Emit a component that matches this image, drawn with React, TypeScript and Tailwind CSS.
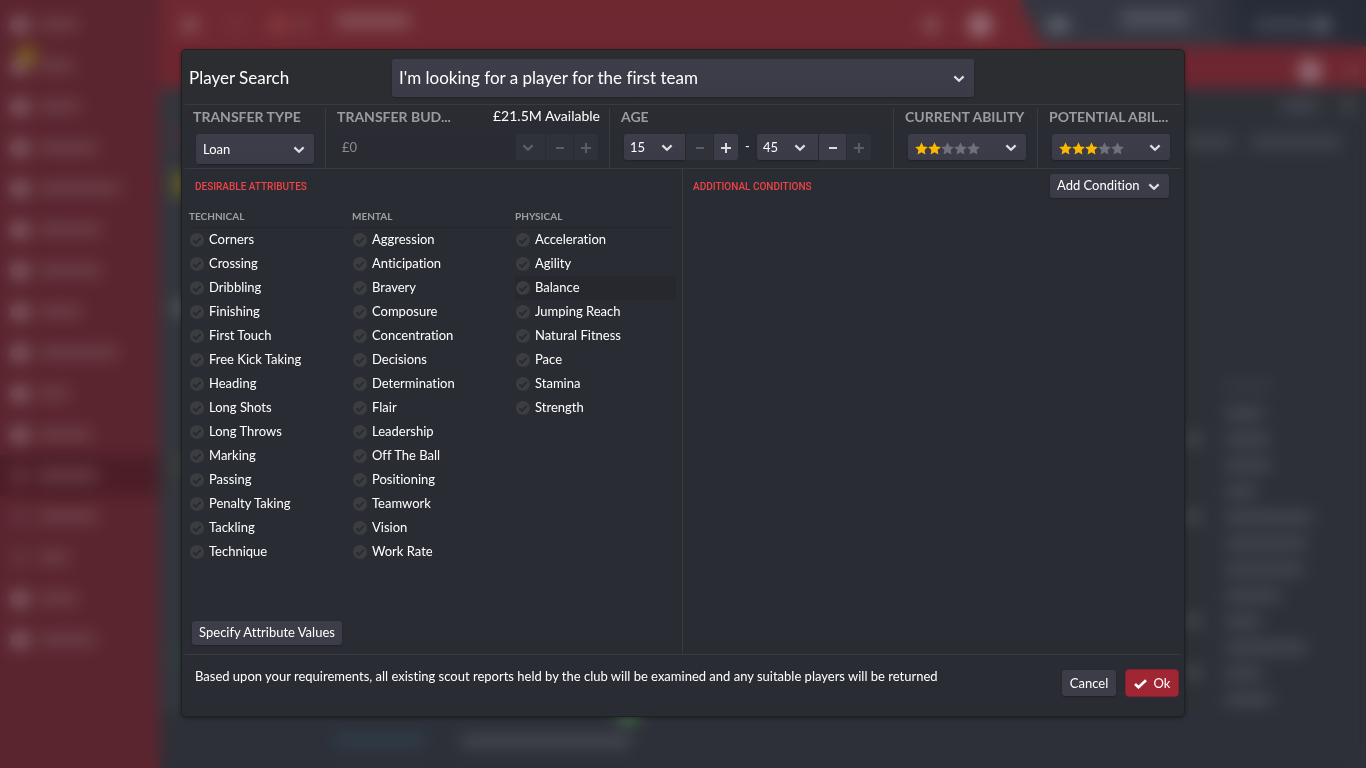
import React, { useState } from 'react';
import clsx from 'clsx';

type GroupName = 'Technical' | 'Mental' | 'Physical';

const ATTRIBUTES: Record<GroupName, string[]> = {
  Technical: ['Corners', 'Crossing', 'Dribbling', 'Finishing', 'First Touch', 'Free Kick Taking', 'Heading', 'Long Shots', 'Long Throws', 'Marking', 'Passing', 'Penalty Taking', 'Tackling', 'Technique'],
  Mental: ['Aggression', 'Anticipation', 'Bravery', 'Composure', 'Concentration', 'Decisions', 'Determination', 'Flair', 'Leadership', 'Off The Ball', 'Positioning', 'Teamwork', 'Vision', 'Work Rate'],
  Physical: ['Acceleration', 'Agility', 'Balance', 'Jumping Reach', 'Natural Fitness', 'Pace', 'Stamina', 'Strength'],
};

const HIGHLIGHTED = 'Balance';

// label widths of the shell behind the dialog
const NAV_WIDTHS = [38, 34, 40, 58, 80, 62, 62, 42, 78, 30, 52, 58, 58, 30, 38, 56];
const ROW_WIDTHS = [37, 43, 44, 30, 86, 80, 77, 54, 35, 80, 35, 45];
const ROWS_WITH_VALUE = [1, 4, 8, 10];

const Chevron: React.FC<{ className?: string }> = ({ className }) => (
  <svg viewBox="0 0 12 8" className={clsx('h-2 w-3 shrink-0', className)} fill="none" stroke="currentColor" strokeWidth="2.2" aria-hidden="true">
    <path d="M1.4 1.4 6 5.800l4.600-4.400" />
  </svg>
);

const Minus: React.FC = () => (
  <svg viewBox="0 0 10 10" className="size-[10px]" fill="none" stroke="currentColor" strokeWidth="2" aria-hidden="true">
    <path d="M1 5h8" />
  </svg>
);

const Plus: React.FC = () => (
  <svg viewBox="0 0 10 10" className="size-[10px]" fill="none" stroke="currentColor" strokeWidth="2" aria-hidden="true">
    <path d="M0 5h10M5 0v10" />
  </svg>
);

const Star: React.FC<{ filled: boolean }> = ({ filled }) => (
  <svg viewBox="0 0 24 24" className={clsx('size-[13px]', filled ? 'text-[#fbba00]' : 'text-[#6f717a]')} fill="currentColor" aria-hidden="true">
    <path d="M12 .6l3.500 7.500 8.200 1-6 5.700 1.500 8.200L12 19l-7.200 4 1.500-8.200-6-5.700 8.200-1z" />
  </svg>
);

interface DropdownProps {
  label: string;
  options: string[];
  className?: string;
  selectClassName?: string;
  chevronClassName?: string;
}

const Dropdown: React.FC<DropdownProps> = ({ label, options, className, selectClassName, chevronClassName }) => (
  <div className={clsx('relative flex bg-linear-to-b from-[#3d3e49] to-[#3a3b46] shadow-[0_1px_2px_rgba(0,0,0,0.25)]', className)}>
    <select aria-label={label} className={clsx('w-full appearance-none bg-transparent outline-none', selectClassName)}>
      {options.map((o) => (
        <option key={o}>{o}</option>
      ))}
    </select>
    <span className={clsx('pointer-events-none absolute inset-y-0 flex items-center pt-px text-[#dedee0]', chevronClassName)}>
      <Chevron />
    </span>
  </div>
);

const StarDropdown: React.FC<{ label: string; initial: number }> = ({ label, initial }) => {
  const [value, setValue] = useState(initial);
  return (
    <div className="relative mr-[11px] ml-[14px] flex h-[26px] items-center justify-between rounded-[3px] bg-linear-to-b from-[#3d3e49] to-[#3a3b46] pt-[2px] pr-[9px] pl-[7px] text-[#dedee0] shadow-[0_1px_2px_rgba(0,0,0,0.25)]">
      <span className="flex">
        {[1, 2, 3, 4, 5].map((n) => (
          <Star key={n} filled={n <= value} />
        ))}
      </span>
      <Chevron />
      <select aria-label={label} value={value} onChange={(e) => setValue(Number(e.target.value))} className="absolute inset-0 w-full opacity-0">
        {[1, 2, 3, 4, 5].map((n) => (
          <option key={n} value={n}>{n}</option>
        ))}
      </select>
    </div>
  );
};

const StepButton: React.FC<{ label: string; disabled?: boolean; className?: string; children: React.ReactNode }> = ({ label, disabled, className, children }) => (
  <button
    type="button"
    aria-label={label}
    disabled={disabled}
    className={clsx('flex h-[26px] items-center justify-center pt-px', disabled ? 'bg-[#30323a] text-[#5c5e66]' : 'bg-[#3c3d48] text-[#dedee0]', className)}
  >
    {children}
  </button>
);

const AgeStepper: React.FC<{ label: string; value: string; atMin?: boolean; atMax?: boolean }> = ({ label, value, atMin, atMax }) => (
  <div className="flex gap-px">
    <Dropdown label={label} options={[value]} className="h-[26px] w-[61px] rounded-l-[3px]" selectClassName="pt-px pl-1.5 text-[13px]" chevronClassName="right-3" />
    <StepButton label={`Decrease ${label}`} disabled={atMin} className="w-[27px]">
      <Minus />
    </StepButton>
    <StepButton label={`Increase ${label}`} disabled={atMax} className="w-6 rounded-r-[3px]">
      <Plus />
    </StepButton>
  </div>
);

const Filter: React.FC<{ title: string; note?: string; children: React.ReactNode }> = ({ title, note, children }) => (
  <div className="group/filter mt-[3px] min-w-0 border-l border-[#3a3b3e] first:border-l-0">
    <div className="flex h-[26px] items-start justify-between pr-[9px] pl-[11px] group-first/filter:pl-2">
      <h3 className="text-[14px] leading-[18px] font-bold whitespace-nowrap text-[#9b9ca0]">{title}</h3>
      {note && <span className="text-[14px] leading-4 whitespace-nowrap">{note}</span>}
    </div>
    {children}
  </div>
);

const AttributeColumn: React.FC<{ name: GroupName }> = ({ name }) => (
  <fieldset className="min-w-0">
    <legend className="h-[18px] w-full border-b border-[#25272c] text-[10px] leading-3 font-bold text-[#9fa0a3] uppercase">{name}</legend>
    {ATTRIBUTES[name].map((attr) => (
      <label key={attr} className={clsx('flex h-6 items-center gap-[5px] pl-px text-[13px]', attr === HIGHLIGHTED && 'bg-[#26282d]')}>
        <span className="relative flex size-[14px]">
          <input type="checkbox" className="peer size-[14px] appearance-none rounded-full bg-[#3c3d41] checked:bg-[#4f9d54]" />
          <svg viewBox="0 0 14 14" className="pointer-events-none absolute inset-0 size-[14px] text-[#292b30] peer-checked:text-white" fill="none" stroke="currentColor" strokeWidth="1.900" aria-hidden="true">
            <path d="M3.400 7.300 6 9.800l4.700-5" />
          </svg>
        </span>
        {attr}
      </label>
    ))}
  </fieldset>
);

const Shell: React.FC = () => (
  <div className="flex min-h-screen bg-[#2d3037]" aria-hidden="true">
    <div className="w-40 shrink-0 bg-[#5b252f] pt-1">
      {NAV_WIDTHS.map((w, i) => (
        <div key={i} className={clsx('flex h-[41px] items-center gap-2.5 pl-[11px]', i === 11 && 'bg-[#4c1d27]')}>
          <span className={clsx('relative size-[18px] rounded-full', i > 10 && i < 14 ? 'bg-[#653640]' : 'bg-[#87656c]')}>
            {i === 1 && <span className="absolute -top-3 left-1.5 size-5 rounded-full bg-[#79601c]" />}
          </span>
          <span className="h-[11px] bg-[#6e434b]" style={{ width: w }} />
        </div>
      ))}
    </div>
    <div className="flex min-w-0 flex-1 flex-col">
      <div className="flex h-[46px] bg-[#6e2831]">
        <div className="flex flex-1 items-center gap-3 pt-1 pl-[22px]">
          <span className="size-4 bg-[#87525a]" />
          <span className="ml-5 size-3 bg-[#743841]" />
          <span className="ml-4 size-[18px] bg-[#863b40]" />
          <span className="mr-4 h-4 w-2 bg-[#7f444b]" />
          <span className="mb-2 h-[14px] w-[74px] bg-[#84525a]" />
          <span className="ml-auto size-[18px] rounded-full bg-[#85505a]" />
          <span className="mr-7 ml-4 size-6 rounded-full bg-[#987078]" />
        </div>
        <div className="flex w-[346px] items-center bg-linear-to-r from-[#343741] from-55% to-[#272c38] to-65% pt-1 pl-[28px] [clip-path:polygon(0_0,100%_0,100%_100%,22px_100%)]">
          <span className="h-3 w-5 bg-[#6d7179]" />
          <span className="mb-3 ml-[53px] h-4 w-[68px] bg-[#50535c]" />
          <span className="ml-[66px] h-[10px] w-[56px] bg-[#454a56]" />
          <span className="ml-1 size-3.5 bg-[#626671]" />
        </div>
      </div>
      <div className="flex h-[42px] items-center justify-end gap-6 bg-[#6e2630] pt-2 pr-2">
        <span className="size-6 rounded-full bg-[#94707a]" />
        <span className="size-3 bg-[#793a40]" />
      </div>
      <div className="flex flex-1 justify-between">
        <div className="flex w-[26px] flex-col items-end bg-[#32373e]">
          <span className="mt-10 h-4 w-2 bg-[#6e2c3a]" />
          <span className="mt-7 h-6 w-[11px] bg-[#78701d]" />
          <span className="mt-[104px] h-4 w-3 bg-[#5b6066]" />
          <span className="mt-[142px] h-4 w-2 bg-[#445226]" />
          <span className="mt-auto mb-[48px] h-4 w-3 bg-[#294539]" />
        </div>
        <div className="w-[180px]">
          <div className="flex justify-end gap-6 pt-3 pr-3">
            <span className="h-3 w-9 bg-[#444750]" />
            <span className="size-3 bg-[#464b4e]" />
          </div>
          <div className="flex gap-5 pt-6">
            <span className="h-[12px] w-[46px] bg-[#42454c]" />
            <span className="h-[12px] w-[88px] bg-[#42454c]" />
          </div>
          <div className="mt-[232px] mb-2 ml-[38px] h-3 w-12 bg-[#363941]" />
          {ROW_WIDTHS.map((w, i) => (
            <div key={i} className="flex h-[26px] items-center">
              <span className={clsx('mr-[26px] h-[10px] w-[14px]', ROWS_WITH_VALUE.includes(i) ? 'bg-[#4f5256]' : 'bg-[#2d3037]')} />
              <span className="h-[11px] bg-[#474a50]" style={{ width: w }} />
            </div>
          ))}
        </div>
      </div>
      <div className="flex h-[56px] items-start bg-[#2d3038] pl-[176px]">
        <span className="mt-6 h-[9px] w-[88px] bg-[#304454]" />
        <span className="mt-6 ml-[38px] h-[11px] w-[168px] bg-[#4b4c54]" />
        <span className="-ml-3 h-[10px] w-5 rounded-full bg-[#4f8a55]" />
      </div>
    </div>
  </div>
);

const PlayerSearchDialog: React.FC = () => (
  <form
    role="dialog"
    aria-label="Player Search"
    onSubmit={(e) => e.preventDefault()}
    className="w-full max-w-[1004px] rounded-[5px] border border-[#221f21] bg-linear-to-b from-[#2c2d31] from-5% to-[#2a2c33] to-12% px-[3px] text-white shadow-[0_1px_4px_rgba(0,0,0,0.4)]"
  >
    <header className="grid h-[54px] grid-cols-[203px_minmax(0,582px)] items-center pt-0.5 pl-1">
      <h2 className="text-[17px]">Player Search</h2>
      <Dropdown label="Search purpose" options={["I'm looking for a player for the first team"]} className="h-[38px] rounded-[3px]" selectClassName="pl-[7px] text-[17px]" chevronClassName="right-[9px]" />
    </header>

    <div className="grid h-[65px] grid-cols-[140fr_284fr_284fr_144fr_144fr] border-y border-[#3a3b3e]">
      <Filter title="TRANSFER TYPE">
        <Dropdown label="Transfer type" options={['Loan']} className="mx-[11px] h-[30px] rounded-[3px]" selectClassName="pt-px pl-[7px] text-[13px]" chevronClassName="right-[9px]" />
      </Filter>
      <Filter title="TRANSFER BUD..." note="£21.5M Available">
        <div className="flex gap-px px-[11px]">
          <input aria-label="Transfer budget" disabled defaultValue="£0" className="h-[26px] min-w-0 flex-1 rounded-l-[3px] bg-[#292a32] px-[5px] text-[13px] text-[#8b8c90]" />
          <StepButton label="Choose budget" disabled className="w-[29px] pr-1.5">
            <Chevron />
          </StepButton>
          <StepButton label="Decrease budget" disabled className="w-[27px]">
            <Minus />
          </StepButton>
          <StepButton label="Increase budget" disabled className="w-6 rounded-r-[3px]">
            <Plus />
          </StepButton>
        </div>
      </Filter>
      <Filter title="AGE">
        <div className="flex items-center pl-[14px] text-[13px]">
          <AgeStepper label="minimum age" value="15" atMin />
          <span className="w-[19px] text-center">-</span>
          <AgeStepper label="maximum age" value="45" atMax />
        </div>
      </Filter>
      <Filter title="CURRENT ABILITY">
        <StarDropdown label="Current ability" initial={2} />
      </Filter>
      <Filter title="POTENTIAL ABIL...">
        <StarDropdown label="Potential ability" initial={3} />
      </Filter>
    </div>

    <div className="grid grid-cols-[497fr_499fr] border-b border-[#3a3b3e]">
      <section className="flex flex-col pt-3 pb-[9px] pl-1">
        <h3 className="pl-1.5 font-['Roboto',sans-serif] text-[10px] leading-3 font-medium text-[#ee4347]">DESIRABLE ATTRIBUTES</h3>
        <div className="mt-[17px] grid grid-cols-3 gap-x-0.5 pr-1.5">
          <AttributeColumn name="Technical" />
          <AttributeColumn name="Mental" />
          <AttributeColumn name="Physical" />
        </div>
        <button type="button" className="mt-[57px] ml-[3px] h-6 w-[150px] self-start rounded-[3px] bg-[#3c3d48] text-[13px] shadow-[0_1px_2px_rgba(0,0,0,0.25)]">
          Specify Attribute Values
        </button>
      </section>
      <section className="flex items-start justify-between border-l border-[#3a3b3e] pt-[5px] pr-3 pl-[10px]">
        <h3 className="pt-[7px] font-['Roboto',sans-serif] text-[10px] leading-3 font-medium text-[#ee4347]">ADDITIONAL CONDITIONS</h3>
        <Dropdown label="Add condition" options={['Add Condition']} className="h-6 w-[119px] rounded-[3px]" selectClassName="pl-[7px] text-[13px]" chevronClassName="right-[9px]" />
      </section>
    </div>

    <footer className="flex h-[61px] items-start pt-[14px] pr-0.5 pl-[10px] text-[13px]">
      <p className="flex-1 leading-[14px]">Based upon your requirements, all existing scout reports held by the club will be examined and any suitable players will be returned</p>
      <button type="button" className="mt-px h-[26px] w-[54px] rounded-[3px] bg-[#3c3d48] pt-px shadow-[0_1px_2px_rgba(0,0,0,0.25)]">Cancel</button>
      <button type="submit" className="ml-[9px] flex h-7 w-[54px] items-center justify-center gap-[7px] rounded-[4px] border border-[#85202c] bg-[#a12634] pt-px">
        <svg viewBox="0 0 13 10" className="h-[10px] w-[13px]" fill="none" stroke="currentColor" strokeWidth="2.600" aria-hidden="true">
          <path d="M1 5l3.500 3.300L12 1.200" />
        </svg>
        Ok
      </button>
    </footer>
  </form>
);

export default function App() {
  return (
    <div className="relative font-['Lato','Open_Sans',sans-serif] [font-variant-ligatures:none]">
      <Shell />
      <div className="absolute inset-0 flex items-start justify-center pt-[49px] backdrop-blur-[8px]">
        <PlayerSearchDialog />
      </div>
    </div>
  );
}
